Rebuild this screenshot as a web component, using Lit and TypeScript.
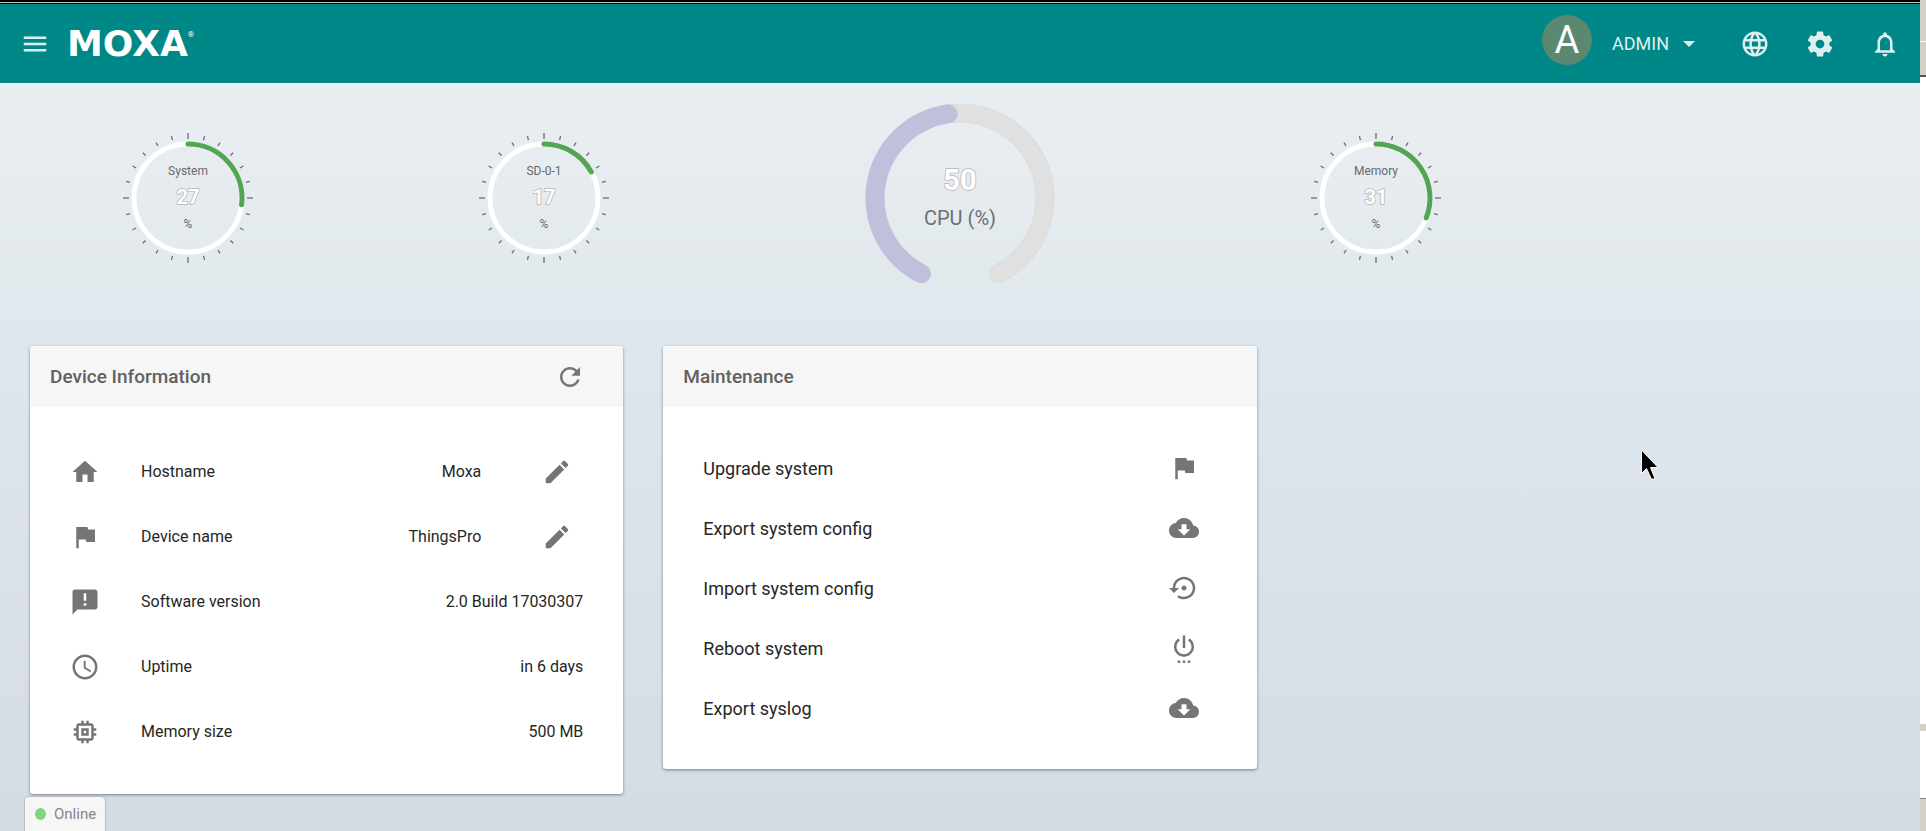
import { LitElement, html, svg, css, nothing } from "lit";
import { customElement, property } from "lit/decorators.js";

const ICONS: Record<string, string> = {
  menu: "M3 18h18v-2H3v2zm0-5h18v-2H3v2zm0-7v2h18V6H3z",
  globe:
    "M11.99 2C6.47 2 2 6.48 2 12s4.47 10 9.99 10C17.52 22 22 17.52 22 12S17.52 2 11.99 2zm6.93 6h-2.95c-.32-1.25-.78-2.45-1.38-3.56 1.84.63 3.37 1.91 4.33 3.56zM12 4.04c.83 1.2 1.48 2.53 1.91 3.96h-3.82c.43-1.43 1.08-2.76 1.91-3.96zM4.26 14C4.1 13.36 4 12.69 4 12s.1-1.36.26-2h3.38c-.08.66-.14 1.32-.14 2 0 .68.06 1.34.14 2H4.26zm.82 2h2.95c.32 1.25.78 2.45 1.38 3.56-1.84-.63-3.37-1.9-4.33-3.56zm2.95-8H5.08c.96-1.66 2.49-2.93 4.33-3.56C8.81 5.55 8.35 6.75 8.03 8zM12 19.96c-.83-1.2-1.48-2.53-1.91-3.96h3.82c-.43 1.43-1.08 2.76-1.91 3.96zM14.34 14H9.66c-.09-.66-.16-1.32-.16-2 0-.68.07-1.35.16-2h4.68c.09.65.16 1.32.16 2 0 .68-.07 1.34-.16 2zm.25 5.56c.6-1.11 1.06-2.31 1.38-3.56h2.95c-.96 1.65-2.49 2.93-4.33 3.56zM16.36 14c.08-.66.14-1.32.14-2 0-.68-.06-1.34-.14-2h3.38c.16.64.26 1.31.26 2s-.1 1.36-.26 2h-3.38z",
  settings:
    "M19.43 12.98c.04-.32.07-.64.07-.98s-.03-.66-.07-.98l2.11-1.65c.19-.15.24-.42.12-.64l-2-3.46c-.12-.22-.39-.3-.61-.22l-2.49 1c-.52-.4-1.08-.73-1.69-.98l-.38-2.65C14.46 2.18 14.25 2 14 2h-4c-.25 0-.46.18-.49.42l-.38 2.65c-.61.25-1.17.59-1.69.98l-2.49-1c-.23-.09-.49 0-.61.22l-2 3.46c-.13.22-.07.49.12.64l2.11 1.65c-.04.32-.07.65-.07.98s.03.66.07.98l-2.11 1.65c-.19.15-.24.42-.12.64l2 3.46c.12.22.39.3.61.22l2.49-1c.52.4 1.08.73 1.69.98l.38 2.65c.03.24.24.42.49.42h4c.25 0 .46-.18.49-.42l.38-2.65c.61-.25 1.17-.59 1.69-.98l2.49 1c.23.09.49 0 .61-.22l2-3.46c.12-.22.07-.49-.12-.64l-2.11-1.65zM12 15.5c-1.93 0-3.5-1.57-3.5-3.5s1.57-3.5 3.5-3.5 3.5 1.57 3.5 3.5-1.57 3.5-3.5 3.5z",
  bell: "M12 22c1.1 0 2-.9 2-2h-4c0 1.1.9 2 2 2zm6-6v-5c0-3.07-1.63-5.64-4.5-6.32V4c0-.83-.67-1.5-1.5-1.5s-1.5.67-1.5 1.5v.68C7.64 5.36 6 7.92 6 11v5l-2 2v1h16v-1l-2-2zm-2 1H8v-6c0-2.48 1.51-4.5 4-4.5s4 2.02 4 4.5v6z",
  home: "M10 20v-6h4v6h5v-8h3L12 3 2 12h3v8z",
  flag: "M14.4 6L14 4H5v17h2v-7h5.6l.4 2h7V6z",
  announcement:
    "M20 2H4c-1.1 0-1.99.9-1.99 2L2 22l4-4h14c1.1 0 2-.9 2-2V4c0-1.1-.9-2-2-2zm-7 9h-2V5h2v6zm0 4h-2v-2h2v2z",
  clock:
    "M11.99 2C6.47 2 2 6.48 2 12s4.47 10 9.99 10C17.52 22 22 17.52 22 12S17.52 2 11.99 2zM12 20c-4.42 0-8-3.58-8-8s3.58-8 8-8 8 3.58 8 8-3.58 8-8 8zM12.5 7H11v6l5.25 3.15.75-1.23-4.5-2.67z",
  memory:
    "M15 9H9v6h6V9zm-2 4h-2v-2h2v2zm8-2V9h-2V7c0-1.1-.9-2-2-2h-2V3h-2v2h-2V3H9v2H7c-1.1 0-2 .9-2 2v2H3v2h2v2H3v2h2v2c0 1.1.9 2 2 2h2v2h2v-2h2v2h2v-2h2c1.1 0 2-.9 2-2v-2h2v-2h-2v-2h2zm-4 6H7V7h10v10z",
  edit: "M3 17.25V21h3.75L17.81 9.94l-3.75-3.75L3 17.25zM20.71 7.04c.39-.39.39-1.02 0-1.41l-2.34-2.34c-.39-.39-1.02-.39-1.41 0l-1.83 1.83 3.75 3.75 1.83-1.83z",
  refresh:
    "M17.65 6.35C16.2 4.9 14.21 4 12 4c-4.42 0-7.99 3.58-7.99 8s3.57 8 7.99 8c3.73 0 6.84-2.55 7.73-6h-2.08c-.82 2.33-3.04 4-5.65 4-3.31 0-6-2.69-6-6s2.69-6 6-6c1.66 0 3.14.69 4.22 1.78L13 11h7V4l-2.35 2.35z",
  cloud:
    "M19.35 10.04C18.67 6.59 15.64 4 12 4 9.11 4 6.6 5.64 5.35 8.04 2.34 8.36 0 10.91 0 14c0 3.31 2.69 6 6 6h13c2.76 0 5-2.24 5-5 0-2.64-2.05-4.78-4.65-4.96zM17 13l-5 5-5-5h3V9h4v4h3z",
  restore:
    "M14 12c0-1.1-.9-2-2-2s-2 .9-2 2 .9 2 2 2 2-.9 2-2zm-2-9c-4.97 0-9 4.03-9 9H0l4 4 4-4H5c0-3.87 3.13-7 7-7s7 3.13 7 7-3.13 7-7 7c-1.51 0-2.91-.49-4.06-1.3l-1.42 1.44C8.04 20.3 9.94 21 12 21c4.97 0 9-4.03 9-9s-4.03-9-9-9z",
  power:
    "M7 24h2v-2H7v2zm4 0h2v-2h-2v2zm2-22h-2v10h2V2zm3.56 2.44l-1.45 1.45C16.84 6.94 18 8.83 18 11c0 3.31-2.69 6-6 6s-6-2.69-6-6c0-2.17 1.16-4.06 2.88-5.12L7.44 4.44C5.36 5.88 4 8.28 4 11c0 4.42 3.58 8 8 8s8-3.58 8-8c0-2.72-1.36-5.12-3.44-6.56zM15 24h2v-2h-2v2z",
};

@customElement("md-icon")
class MdIcon extends LitElement {
  @property() name = "";

  static styles = css`
    :host { display: block; flex: none; width: 30px; height: 30px; }
    .glyph { display: block; width: 100%; height: 100%; fill: currentColor; fill-rule: evenodd; }
  `;

  render() {
    return html`<svg class="glyph" viewBox="0 0 24 24" aria-hidden="true"><path d=${ICONS[this.name] ?? ""}></path></svg>`;
  }
}

// Point on a circle around the origin; degrees run clockwise from 12 o'clock.
const polar = (radius: number, degrees: number) => {
  const a = (degrees * Math.PI) / 180;
  return { x: radius * Math.sin(a), y: -radius * Math.cos(a) };
};

const arc = (radius: number, from: number, to: number) => {
  const a = polar(radius, from);
  const b = polar(radius, to);
  return `M${a.x} ${a.y}A${radius} ${radius} 0 ${to - from > 180 ? 1 : 0} 1 ${b.x} ${b.y}`;
};

@customElement("ring-gauge")
class RingGauge extends LitElement {
  @property() label = "";
  @property({ type: Number }) value = 0;

  static styles = css`
    :host { display: block; }
    .dial { display: block; width: 134px; height: 134px; font-family: Roboto, sans-serif; text-anchor: middle; }
    .tick { stroke: #6a6f73; stroke-width: 1.3; }
    .track { fill: none; stroke: #fff; stroke-width: 5; }
    .level { fill: none; stroke: #52a552; stroke-width: 5; stroke-linecap: round; }
    .caption { fill: #666a70; font-size: 12px; }
    .number { fill: #fff; font-size: 20px; font-weight: 700; stroke: #b0b5ba; stroke-width: 1.5; paint-order: stroke; }
  `;

  render() {
    const ticks = Array.from({ length: 24 }, (_, i) => {
      const major = i % 6 === 0;
      const a = polar(major ? 59 : 60, i * 15);
      const b = polar(major ? 65 : 64, i * 15);
      return svg`<line class="tick" x1=${a.x} y1=${a.y} x2=${b.x} y2=${b.y}></line>`;
    });
    return html`
      <svg class="dial" viewBox="-67 -67 134 134" role="img" aria-label="${this.label} ${this.value} %">
        ${ticks}
        <circle class="track" r="54"></circle>
        <path class="level" d=${arc(54, 0, this.value * 3.6)}></path>
        <text class="caption" y="-23">${this.label}</text>
        <text class="number" y="6">${this.value}</text>
        <text class="caption" y="30">%</text>
      </svg>
    `;
  }
}

@customElement("cpu-gauge")
class CpuGauge extends LitElement {
  @property({ type: Number }) value = 0;

  static styles = css`
    :host { display: block; }
    .dial { display: block; width: 190px; height: 190px; font-family: Roboto, sans-serif; text-anchor: middle; }
    .edge, .track, .level { fill: none; stroke-linecap: round; }
    .edge { stroke: #dbdbdc; stroke-width: 19; }
    .track { stroke: #e0e0e0; stroke-width: 17; }
    .level { stroke: #c1c0dc; stroke-width: 19; }
    .number { fill: #fff; font-size: 29px; font-weight: 700; stroke: #b0b5ba; stroke-width: 1.5; paint-order: stroke; }
    .caption { fill: #6b6f73; font-size: 20px; }
  `;

  render() {
    const start = -153;
    const span = 290;
    const end = start + (span * this.value) / 100;
    return html`
      <svg class="dial" viewBox="-95 -95 190 190" role="img" aria-label="CPU ${this.value} %">
        <path class="edge" d=${arc(85, start, 153)}></path>
        <path class="track" d=${arc(85, start, 153)}></path>
        <path class="level" d=${arc(85, start, end)}></path>
        <text class="number" y="-8">${this.value}</text>
        <text class="caption" y="27">CPU (%)</text>
      </svg>
    `;
  }
}

@customElement("app-root")
class AppRoot extends LitElement {
  private device = [
    { icon: "home", name: "Hostname", value: "Moxa", editable: true },
    { icon: "flag", name: "Device name", value: "ThingsPro", editable: true },
    { icon: "announcement", name: "Software version", value: "2.0 Build 17030307", editable: false },
    { icon: "clock", name: "Uptime", value: "in 6 days", editable: false },
    { icon: "memory", name: "Memory size", value: "500 MB", editable: false },
  ];

  private tasks = [
    { icon: "flag", name: "Upgrade system" },
    { icon: "cloud", name: "Export system config" },
    { icon: "restore", name: "Import system config" },
    { icon: "power", name: "Reboot system" },
    { icon: "cloud", name: "Export syslog" },
  ];

  static styles = css`
    :host { display: block; font-family: Roboto, sans-serif; color: #262626; }
    * { box-sizing: border-box; }
    button { margin: 0; padding: 0; border: 0; background: none; color: inherit; font: inherit; cursor: pointer; }
    ul { margin: 0; padding: 0; list-style: none; }

    .shell { display: flex; min-height: 100vh; }
    .page {
      flex: 1; min-width: 0; display: flex; flex-direction: column;
      background: linear-gradient(#e9eef2 10%, #e2e9ed 34%, #dfe7ee 41%, #d7dee6 85%, #d4dee4 89%, #d2dce2);
    }

    .topline { height: 4px; background: linear-gradient(#000 50%, #bbb 50%, #bbb 75%, #000 75%); }
    .bar {
      display: flex; align-items: center; justify-content: space-between;
      height: 79px; padding: 0 20px; background: #008787; color: #deefef;
    }
    .brand, .tools { display: flex; align-items: center; }
    .brand { gap: 17px; }
    .logo { display: flex; align-items: flex-start; color: #fff; text-decoration: none; }
    .word { font: bold 36px/34px "DejaVu Sans", sans-serif; }
    .mark { font-size: 8px; line-height: 16px; }
    .tools { gap: 35px; }
    .user { display: flex; align-items: center; gap: 20px; font-size: 18px; }
    .avatar {
      display: grid; place-items: center; width: 50px; height: 50px; margin-bottom: 7px;
      border-radius: 50%; background: #5b8870; color: #fff; font-size: 38px; line-height: 50px;
    }
    .account { display: flex; align-items: center; gap: 14px; margin-right: 10px; }
    .caret { border: 6px solid transparent; border-top-color: currentColor; border-bottom: 0; }

    .gauges {
      display: grid; grid-template-columns: 3fr 3fr 4fr 3fr 3fr;
      place-items: center; padding: 20px 10px 53px;
    }

    .cards {
      display: grid; grid-template-columns: repeat(3, 1fr); align-items: start;
      gap: 40px; padding: 0 30px 37px;
    }
    .card { border-radius: 3px; background: #fff; box-shadow: 0 1px 3px rgba(40, 50, 60, 0.55); }
    .head {
      display: flex; align-items: center; justify-content: space-between;
      height: 61px; padding: 0 38px 0 20px; border-radius: 3px 3px 0 0;
      background: #f6f6f6; color: #616161;
    }
    .title { margin: 0; font-size: 19px; line-height: 24px; font-weight: 500; }
    .action { color: #757575; }

    .facts { padding: 32px 40px 30px; }
    .fact { display: flex; align-items: center; height: 65px; font-size: 16px; }
    .symbol { color: #757575; }
    .name { flex: 1; padding-left: 41px; }
    .edit { margin-left: 61px; margin-right: 11px; color: #757575; }

    .tasks { padding: 31px 40px; }
    .task {
      display: flex; align-items: center; justify-content: space-between;
      width: 100%; height: 60px; padding-right: 18px; font-size: 18px; text-align: left;
    }

    .status {
      position: fixed; left: 24px; bottom: 0; display: flex; align-items: center; gap: 8px;
      height: 35px; padding: 0 9px 0 10px; border: 1px solid #b9bfc4; border-bottom: 0;
      border-radius: 5px 5px 0 0; background: #f6f6f6; color: #858585; font-size: 15px;
    }
    .dot { width: 11px; height: 12px; border-radius: 50%; background: #80d680; }

    .pointer { position: absolute; left: 1641px; top: 449px; width: 18px; height: 32px; }

    .frame { flex: none; display: flex; flex-direction: column; width: 6px; background: #d4d0c8; }
    .frame-top { height: 77px; border-bottom: 2px solid #555; background: linear-gradient(#d4d0c8 41px, #fff 41px, #fff 42px, #d4d0c8 42px); }
    .frame-body { flex: 1; background: #fff; }
    .frame-rule { height: 7px; }
    .frame-field { height: 68px; border-bottom: 1px solid #888; background: #fff; }
    .frame-end { height: 32px; }
  `;

  render() {
    return html`
      <div class="shell">
        <div class="page">
          <div class="topline"></div>
          <header class="bar">
            <div class="brand">
              <button aria-label="Menu"><md-icon name="menu"></md-icon></button>
              <a class="logo" href="#"><span class="word">MOXA</span><span class="mark">®</span></a>
            </div>
            <div class="tools">
              <div class="user">
                <span class="avatar">A</span>
                <button class="account">ADMIN <span class="caret"></span></button>
              </div>
              <button aria-label="Language"><md-icon name="globe"></md-icon></button>
              <button aria-label="Settings"><md-icon name="settings"></md-icon></button>
              <button aria-label="Notifications"><md-icon name="bell"></md-icon></button>
            </div>
          </header>

          <section class="gauges">
            <ring-gauge label="System" value="27"></ring-gauge>
            <ring-gauge label="SD-0-1" value="17"></ring-gauge>
            <cpu-gauge value="50"></cpu-gauge>
            <ring-gauge label="Memory" value="31"></ring-gauge>
          </section>

          <main class="cards">
            <section class="card">
              <header class="head">
                <h2 class="title">Device Information</h2>
                <button class="action" aria-label="Refresh"><md-icon name="refresh"></md-icon></button>
              </header>
              <ul class="facts">
                ${this.device.map(
                  (row) => html`
                    <li class="fact">
                      <md-icon class="symbol" name=${row.icon}></md-icon>
                      <span class="name">${row.name}</span>
                      <span>${row.value}</span>
                      ${row.editable
                        ? html`<button class="edit" aria-label="Edit ${row.name}"><md-icon name="edit"></md-icon></button>`
                        : nothing}
                    </li>
                  `
                )}
              </ul>
            </section>

            <section class="card">
              <header class="head"><h2 class="title">Maintenance</h2></header>
              <ul class="tasks">
                ${this.tasks.map(
                  (row) => html`
                    <li>
                      <button class="task"><span>${row.name}</span><md-icon class="symbol" name=${row.icon}></md-icon></button>
                    </li>
                  `
                )}
              </ul>
            </section>
          </main>
        </div>

        <div class="frame" aria-hidden="true">
          <div class="frame-top"></div>
          <div class="frame-body"></div>
          <div class="frame-rule"></div>
          <div class="frame-field"></div>
          <div class="frame-end"></div>
        </div>
      </div>

      <div class="status" role="status"><span class="dot"></span>Online</div>

      <svg class="pointer" viewBox="0 0 18 32" aria-hidden="true">
        <path d="M0.5 1v23.5l5-5 4.8 10.5h3.8l-4.6-11.5h7.5z" fill="#000" stroke="#fff" stroke-width="1"></path>
      </svg>
    `;
  }
}
